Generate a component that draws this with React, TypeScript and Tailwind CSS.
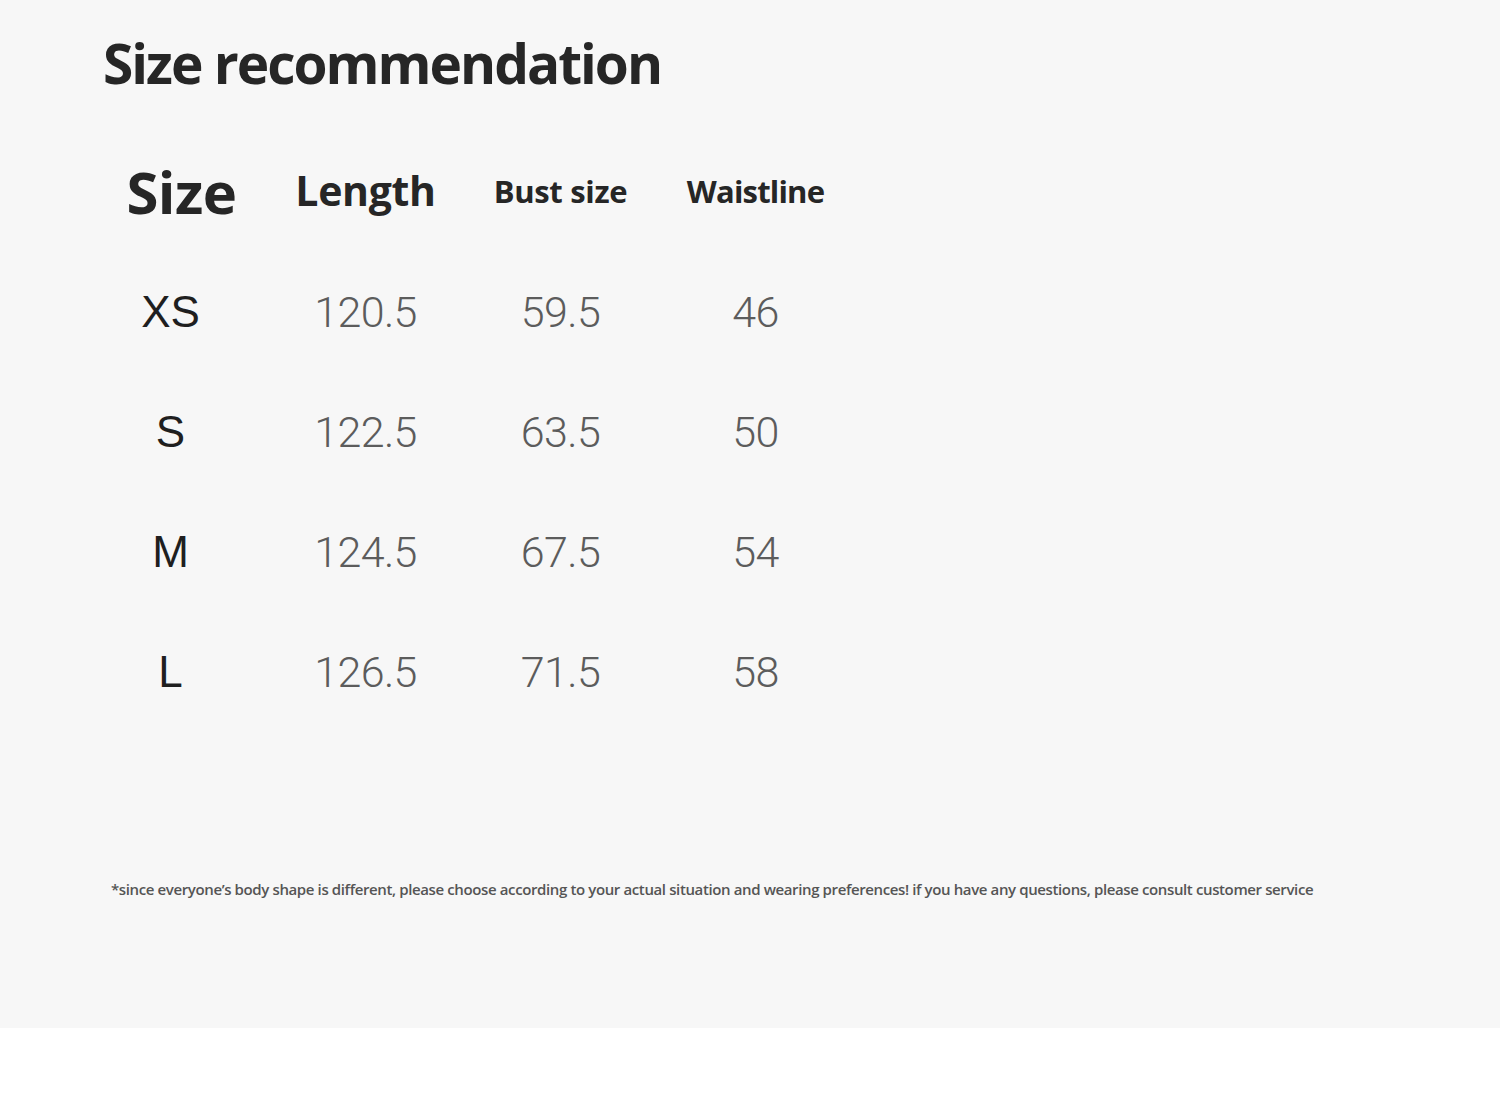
import React from 'react';

interface SizeRow {
  size: string;
  length: string;
  bust: string;
  waist: string;
}

const rows: SizeRow[] = [
  { size: 'XS', length: '120.5', bust: '59.5', waist: '46' },
  { size: 'S', length: '122.5', bust: '63.5', waist: '50' },
  { size: 'M', length: '124.5', bust: '67.5', waist: '54' },
  { size: 'L', length: '126.5', bust: '71.5', waist: '58' },
];

const heading = "font-['Open_Sans',sans-serif] font-bold text-[#262626]";
const num = "font-['Roboto',sans-serif] font-light text-[43px] tracking-[-0.6px] text-[#5c5c5c]";

export default function App() {
  return (
    <div className="w-[1500px] min-h-[1120px] bg-white">
      <section className="h-[1028px] bg-[#f7f7f7] flex flex-col">
        <h1 className={`${heading} text-[55px] leading-none tracking-[-2px] pl-[103px] pt-[35px] h-[130px]`}>
          Size recommendation
        </h1>

        {/* table */}
        <div className="pl-[73px]">
          <div className="grid grid-cols-[195px_195px_195px_195px] items-center h-[122px]">
            <div className={`${heading} text-[58px] pl-[22px] text-center tracking-[-0.5px]`}>Size</div>
            <div className={`${heading} text-[41px] text-center tracking-[-0.3px]`}>Length</div>
            <div className={`${heading} text-[31px] text-center tracking-[-0.3px]`}>Bust size</div>
            <div className={`${heading} text-[31px] text-center tracking-[-0.8px]`}>Waistline</div>
          </div>
          {rows.map((r) => (
            <div key={r.size} className="grid grid-cols-[195px_195px_195px_195px] items-center h-[120px] leading-none">
              <div className="font-['Liberation_Sans',sans-serif] text-[44px] text-[#1f1f1f] text-center">{r.size}</div>
              <div className={`${num} text-center`}>{r.length}</div>
              <div className={`${num} text-center`}>{r.bust}</div>
              <div className={`${num} text-center`}>{r.waist}</div>
            </div>
          ))}
        </div>

        <p className="mt-[146px] pl-[111px] font-['Open_Sans',sans-serif] font-semibold text-[15px] tracking-[-0.38px] text-[#555]">
          *since everyone’s body shape is different, please choose according to your actual situation and wearing preferences! if you have any questions, please consult customer service
        </p>
      </section>
    </div>
  );
}
